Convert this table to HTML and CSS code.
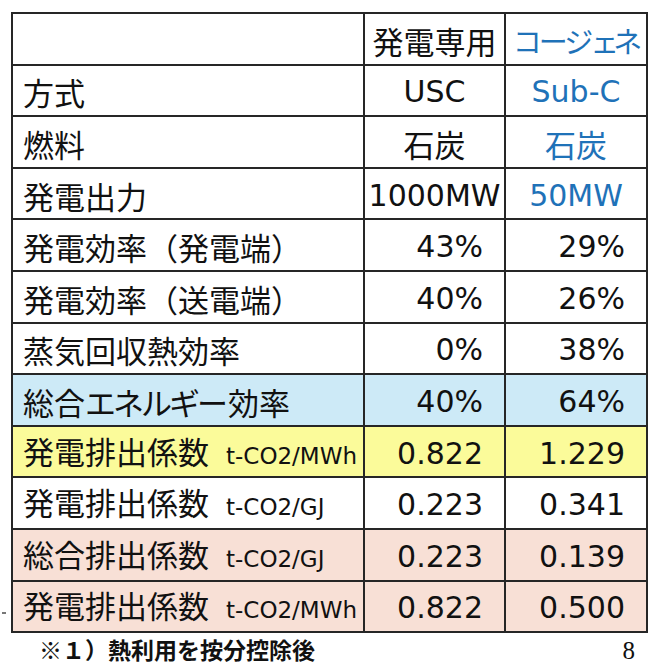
FILE: index.html
```
<!DOCTYPE html>
<html lang="ja">
<head>
<meta charset="utf-8">
<link rel="stylesheet" href="styles.css">
</head>
<body>
<div class="page">
  <table class="cmp">
    <colgroup><col class="c1"><col class="c2"><col class="c3"></colgroup>
    <tr>
      <td class="lbl"></td>
      <td class="ctr jp">発電専用</td>
      <td class="ctr jp blue kana-h">コージ<span class="small-e">ェ</span>ネ</td>
    </tr>
    <tr>
      <td class="lbl">方式</td>
      <td class="ctr num">USC</td>
      <td class="ctr num blue">Sub-C</td>
    </tr>
    <tr>
      <td class="lbl">燃料</td>
      <td class="ctr jp">石炭</td>
      <td class="ctr jp blue">石炭</td>
    </tr>
    <tr>
      <td class="lbl">発電出力</td>
      <td class="ctr num">1000MW</td>
      <td class="ctr num blue">50MW</td>
    </tr>
    <tr>
      <td class="lbl">発電効率（発電端）</td>
      <td class="rt num">43%</td>
      <td class="rt num">29%</td>
    </tr>
    <tr>
      <td class="lbl">発電効率（送電端）</td>
      <td class="rt num">40%</td>
      <td class="rt num">26%</td>
    </tr>
    <tr>
      <td class="lbl">蒸気回収熱効率</td>
      <td class="rt num">0%</td>
      <td class="rt num">38%</td>
    </tr>
    <tr class="sky">
      <td class="lbl">総合<span class="kana">エネルギー</span>効率</td>
      <td class="rt num">40%</td>
      <td class="rt num">64%</td>
    </tr>
    <tr class="lemon">
      <td class="lbl">発電排出係数<span class="unit">t-CO2/MWh</span></td>
      <td class="rt num">0.822</td>
      <td class="rt num">1.229</td>
    </tr>
    <tr>
      <td class="lbl">発電排出係数<span class="unit">t-CO2/GJ</span></td>
      <td class="rt num">0.223</td>
      <td class="rt num">0.341</td>
    </tr>
    <tr class="peach">
      <td class="lbl">総合排出係数<span class="unit">t-CO2/GJ</span></td>
      <td class="rt num">0.223</td>
      <td class="rt num">0.139</td>
    </tr>
    <tr class="peach last">
      <td class="lbl mark">発電排出係数<span class="unit">t-CO2/MWh</span></td>
      <td class="rt num">0.822</td>
      <td class="rt num">0.500</td>
    </tr>
  </table>
  <div class="foot">
    <span class="note">※１）熱利用を按分控除後</span>
    <span class="pageno">8</span>
  </div>
</div>
</body>
</html>
```
FILE: styles.css
```
html, body {
  margin: 0;
  padding: 0;
  background: #ffffff;
}
.page {
  width: 653px;
  height: 668px;
  padding: 12px 0 0 11px;
  box-sizing: border-box;
  color: #111111;
  font-family: "Noto Sans CJK JP", sans-serif;
}
.cmp {
  border-collapse: collapse;
  table-layout: fixed;
  width: 635px;
}
.c1 { width: 352px; }
.c2 { width: 141px; }
.c3 { width: 142px; }
.cmp td {
  border: 2px solid #262626;
  height: 46.6px;
  padding: 3px 0 0 0;
  font-size: 31px;
  line-height: 31px;
  white-space: nowrap;
  overflow: visible;
}
.lbl {
  font-family: "Noto Sans CJK JP", sans-serif;
  padding-left: 10px !important;
  text-align: left;
  position: relative;
}
.jp {
  font-family: "Noto Sans CJK JP", sans-serif;
}
.kana {
  letter-spacing: -3px;
  margin-right: 3px;
}
.kana-h {
  font-size: 29px !important;
  letter-spacing: -3px;
}
.small-e {
  letter-spacing: -6px;
}
.num {
  font-family: "DejaVu Sans", "Noto Sans CJK JP", sans-serif;
  font-size: 30px !important;
}
.ctr { text-align: center; }
.rt {
  text-align: right;
  padding-right: 21px !important;
}
.blue { color: #1f72b8; }
.unit {
  font-family: "DejaVu Sans", sans-serif;
  font-size: 23px;
  margin-left: 17px;
}
.sky td { background: #cdeaf7; }
.lemon td { background: #fbfb9a; }
.peach td { background: #f8e0d6; }
.mark::before {
  content: "";
  position: absolute;
  left: -11px;
  top: 30px;
  width: 4px;
  height: 2px;
  background: #777777;
}
.foot {
  display: flex;
  justify-content: space-between;
  align-items: baseline;
  width: 624px;
  padding-left: 28px;
  box-sizing: border-box;
  margin-top: 3px;
}
.note {
  font-family: "Noto Sans CJK JP", sans-serif;
  font-weight: bold;
  font-size: 23px;
  line-height: 27px;
}
.pageno {
  font-family: "Liberation Serif", serif;
  font-size: 25px;
  line-height: 27px;
}
```
